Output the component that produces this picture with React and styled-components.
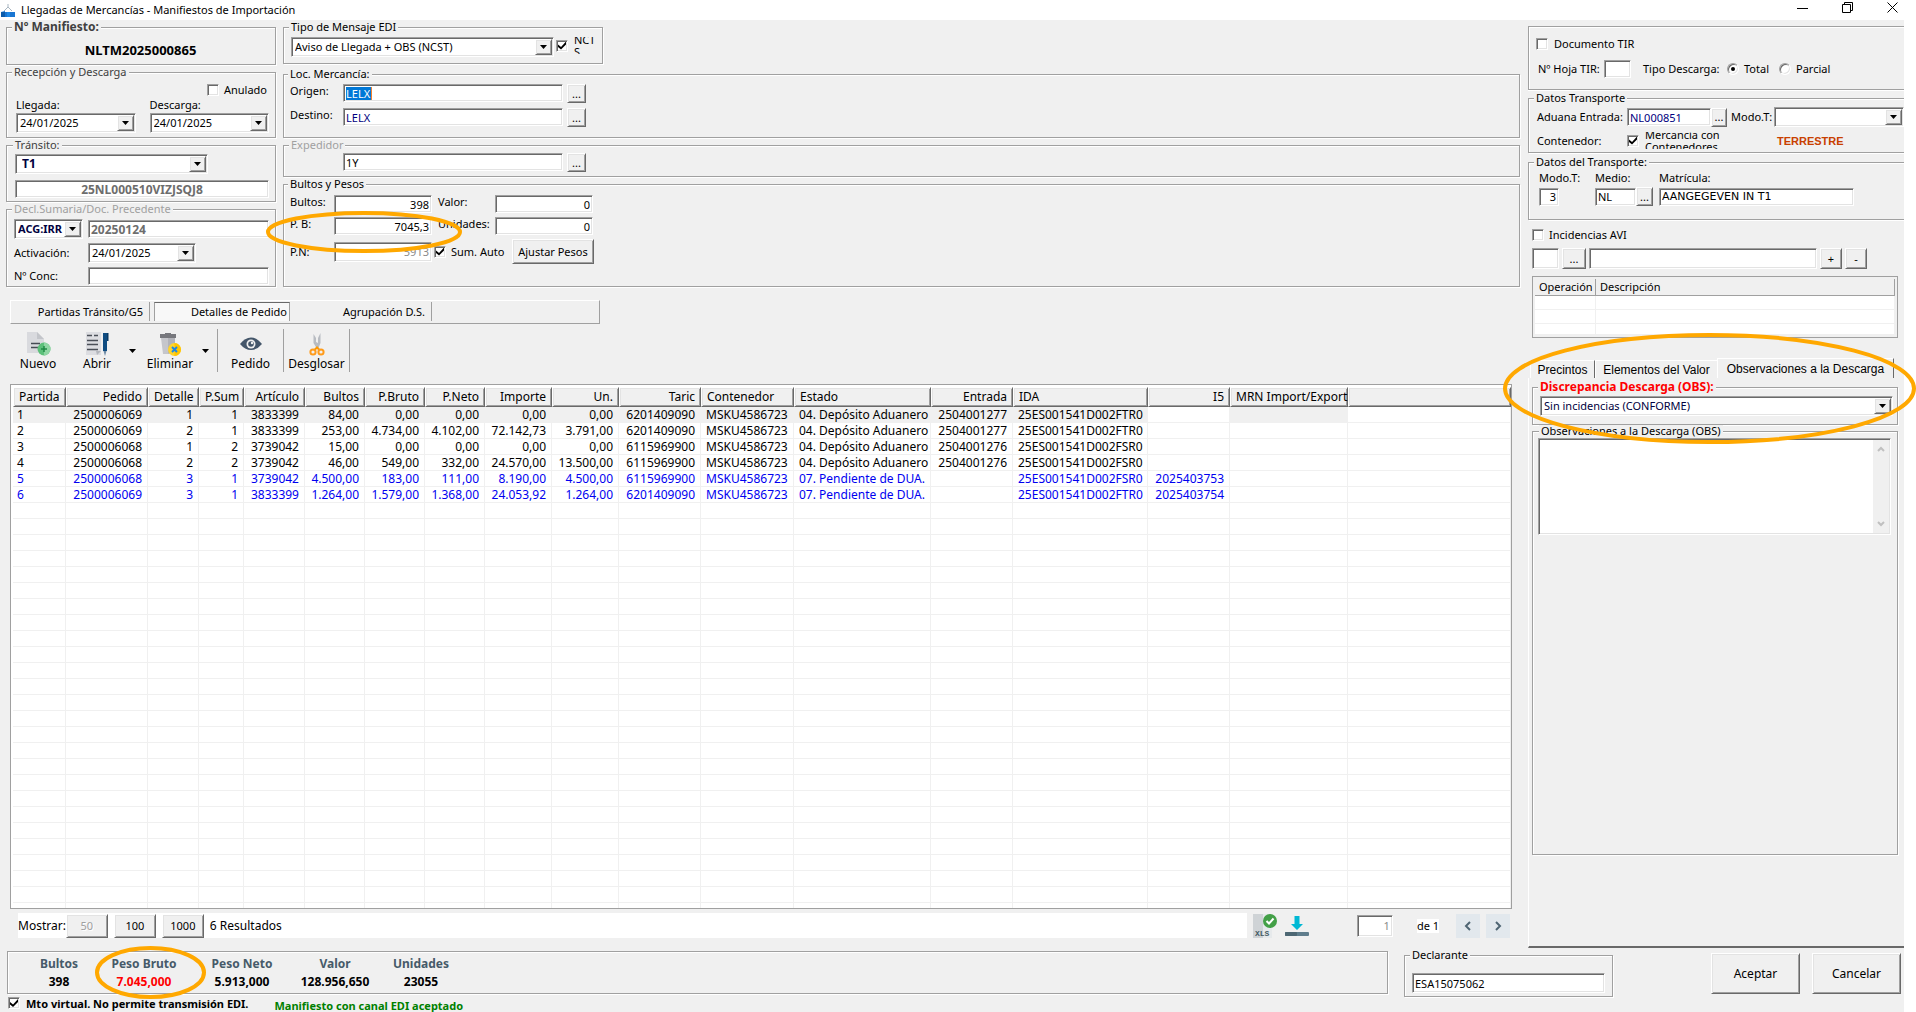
import React, { useState } from "react";
import styled, { createGlobalStyle, css } from "styled-components";

const GlobalStyle = createGlobalStyle`
  * {
    box-sizing: border-box;
  }

  body {
    margin: 0;
    background: #fff;
    color: #000;
    font-family: "Noto Sans", "Open Sans", sans-serif;
    font-size: 11px;
    line-height: 14px;
  }

  button, input, select, textarea {
    font: inherit;
    color: inherit;
    margin: 0;
  }
`;

const sunken = css`
  border: 1px solid;
  border-color: #a0a0a0 #fff #fff #a0a0a0;
  box-shadow: inset 1px 1px 0 #696969, inset -1px -1px 0 #e3e3e3;
`;

const raised = css`
  border: 1px solid;
  border-color: #fff #696969 #696969 #fff;
  box-shadow: inset 1px 1px 0 #e3e3e3, inset -1px -1px 0 #a0a0a0;
`;

const Screen = styled.div`
  display: flex;
  flex-direction: column;
  min-height: 100vh;
  overflow: hidden;
`;

/* ---------- title bar ---------- */

const TitleBar = styled.header`
  display: flex;
  align-items: center;
  gap: 6px;
  height: 20px;
  padding-right: 18px;
`;

const Title = styled.h1`
  flex: 1;
  margin: 0;
  font-size: 11px;
  font-weight: 400;
  line-height: 18px;
`;

const WindowButtons = styled.div`
  display: flex;
  gap: 34px;
  padding-bottom: 6px;
`;

const WindowButton = styled.button`
  display: flex;
  padding: 0;
  border: 0;
  background: none;
`;

/* ---------- page areas ---------- */

const Window = styled.div`
  flex: 1;
  display: flex;
  flex-direction: column;
  margin-right: 12px;
  background: #f0f0f0;
`;

const Body = styled.div`
  flex: 1;
  display: flex;
  gap: 8px;
`;

const Main = styled.main`
  flex: 1;
  min-width: 0;
  display: flex;
  flex-direction: column;
  padding: 1px 0 10px 6px;
`;

const Side = styled.aside`
  width: 376px;
  display: flex;
  flex-direction: column;
  padding-top: 6px;
`;

const HeaderForms = styled.div`
  display: flex;
  gap: 7px;
`;

const FormColumn = styled.div`
  display: flex;
  flex-direction: column;
  gap: 1px;
  width: ${(p) => p.$width || "auto"};
  flex: ${(p) => (p.$width ? "none" : 1)};
`;

/* ---------- group box ---------- */

const Group = styled.fieldset`
  position: relative;
  min-width: 0;
  min-height: ${(p) => p.$height}px;
  width: ${(p) => p.$width || "auto"};
  flex: ${(p) => (p.$grow ? 1 : "none")};
  margin: ${(p) => p.$margin || 0};
  padding: ${(p) => p.$pad || 0};
  border: 1px solid #a0a0a0;
  border-right-width: ${(p) => (p.$open ? 0 : 1)}px;
  box-shadow: inset 1px 1px 0 #fff, 1px 1px 0 #fff;
`;

const Legend = styled.legend`
  margin-left: ${(p) => p.$left || -2}px;
  padding: 0 2px;
  background: #f0f0f0;
  line-height: 12px;
  color: ${(p) => p.$color || "#000"};
  font-weight: ${(p) => (p.$bold ? 700 : 400)};
  font-size: ${(p) => p.$size || 11}px;
`;

const Row = styled.div`
  display: flex;
  align-items: ${(p) => p.$align || "center"};
  justify-content: ${(p) => p.$justify || "flex-start"};
  gap: ${(p) => p.$gap || 0}px;
  padding: ${(p) => p.$pad || 0};
`;

const Stack = styled.div`
  display: flex;
  flex-direction: column;
  gap: ${(p) => p.$gap || 0}px;
`;

const FormGrid = styled.div`
  display: grid;
  grid-template-columns: ${(p) => p.$cols};
  column-gap: ${(p) => p.$colGap || 0}px;
  row-gap: ${(p) => p.$gap || 0}px;
  align-items: ${(p) => p.$align || "center"};
`;

const Label = styled.label`
  width: ${(p) => (p.$width ? p.$width + "px" : "auto")};
  padding-left: ${(p) => p.$indent || 0}px;
  flex: none;
  white-space: nowrap;
`;

/* ---------- controls ---------- */

const Field = styled.input`
  ${sunken}
  width: ${(p) => (p.$width ? p.$width + "px" : "100%")};
  height: ${(p) => p.$height || 18}px;
  padding: 0 2px;
  background: #fff;
  border-radius: 0;
  outline: 0;
  color: ${(p) => p.$color || "#000"};
  text-align: ${(p) => p.$align || "left"};
  font-weight: ${(p) => (p.$bold ? 700 : 400)};
  font-size: ${(p) => p.$size || 11}px;
  font-family: ${(p) => p.$font || "inherit"};
`;

const SelectedField = styled.div`
  ${sunken}
  display: flex;
  align-items: center;
  height: 18px;
  padding: 0 2px;
  background: #fff;

  span {
    padding: 0 1px 0 0;
    border-right: 1px solid #f08030;
    background: #0078d7;
    color: #fff;
    line-height: 13px;
    outline: 0;
  }
`;

const ComboBox = styled.div`
  ${sunken}
  display: flex;
  width: ${(p) => (p.$width ? p.$width + "px" : "100%")};
  flex: ${(p) => (p.$grow ? 1 : "none")};
  min-width: 0;
  height: ${(p) => p.$height || 20}px;
  padding: 2px;
  background: #fff;
  position: relative;
`;

const ComboSelect = styled.select`
  appearance: none;
  width: 100%;
  padding: 0 15px 0 ${(p) => p.$indent || 1}px;
  border: 0;
  outline: 0;
  background: transparent;
  color: ${(p) => p.$color || "#000"};
  font-weight: ${(p) => (p.$bold ? 700 : 400)};
  font-size: ${(p) => p.$size || 11}px;
  line-height: 14px;
`;

const ComboArrow = styled.span`
  ${raised}
  position: absolute;
  top: 1px;
  right: 1px;
  bottom: 1px;
  width: 17px;
  display: flex;
  align-items: center;
  justify-content: center;
  background: #f0f0f0;
  pointer-events: none;
`;

const Button = styled.button`
  ${raised}
  flex: none;
  width: ${(p) => p.$width}px;
  height: ${(p) => p.$height || 19}px;
  padding: 0;
  background: #f0f0f0;
  font-size: ${(p) => p.$size || 11}px;
  white-space: nowrap;

  &:disabled {
    color: #a0a0a0;
    text-shadow: 1px 1px 0 #fff;
  }
`;

const Check = styled.input.attrs({ type: "checkbox" })`
  ${sunken}
  appearance: none;
  flex: none;
  width: 12px;
  height: 12px;
  background: #fff;
  display: grid;
  place-items: center;

  &:checked::before {
    content: "";
    width: 8px;
    height: 8px;
    background: #000;
    clip-path: polygon(0 38%, 38% 68%, 100% 0, 100% 38%, 38% 100%, 0 70%);
  }
`;

const Radio = styled.input.attrs({ type: "radio" })`
  ${sunken}
  appearance: none;
  flex: none;
  width: 12px;
  height: 12px;
  border-radius: 50%;
  background: #fff;
  display: grid;
  place-items: center;

  &:checked::before {
    content: "";
    width: 4px;
    height: 4px;
    border-radius: 50%;
    background: #000;
  }
`;

const ClippedLabel = styled.label`
  display: flex;
  align-items: center;
  width: ${(p) => p.$width}px;
  height: 17px;
  overflow: hidden;
  line-height: 12px;
  word-break: ${(p) => (p.$break ? "break-all" : "normal")};
`;

const ManifestNumber = styled.p`
  margin: 0;
  padding-right: 8px;
  text-align: center;
  font-size: 13px;
  font-weight: 700;
  line-height: 18px;
`;

const Mode = styled.strong`
  padding-left: 46px;
  color: #c84000;
  font-family: "Liberation Sans", Arial, sans-serif;
  font-size: 11px;
`;

/* ---------- tabs and toolbar ---------- */

const TabStrip = styled.div`
  display: flex;
  width: 590px;
  height: 24px;
  margin: 13px 0 0 4px;
  padding: 1px 0 0 2px;
  border: 1px solid;
  border-color: #fff #a0a0a0 #a0a0a0 #fff;
`;

const Tab = styled.button`
  width: ${(p) => p.$width}px;
  margin: 0 4px 2px 0;
  padding: 0 6px 0 0;
  border: 0;
  border-right: 1px solid #a0a0a0;
  background: none;
  text-align: right;

  ${(p) =>
    p.$active &&
    css`
      padding-right: 2px;
      border-top: 1px solid #696969;
      border-left: 1px solid #a0a0a0;
      background: #f8f8f8;
    `}
`;

const Toolbar = styled.div`
  display: flex;
  align-items: stretch;
  height: 43px;
  margin: 5px 0 12px;
`;

const Tool = styled.button`
  display: flex;
  flex-direction: column;
  align-items: center;
  justify-content: flex-end;
  width: ${(p) => p.$width}px;
  padding: 0;
  border: 0;
  border-right: ${(p) => (p.$sep ? "1px solid #a0a0a0" : 0)};
  background: none;
  font-size: 12px;
  line-height: 16px;
`;

const ToolMenu = styled.button`
  display: flex;
  align-items: center;
  justify-content: center;
  width: ${(p) => p.$width}px;
  padding: 0 ${(p) => (p.$sep ? 6 : 0)}px 0 0;
  border: 0;
  border-right: ${(p) => (p.$sep ? "1px solid #a0a0a0" : 0)};
  background: none;
`;

/* ---------- data grid ---------- */

const GridFrame = styled.div`
  flex: 1 1 0;
  min-height: 0;
  margin: 0 8px 0 4px;
  padding: 2px 0 0 2px;
  border: 1px solid #a0a0a0;
  background: #fff;
  overflow: hidden;
`;

const Table = styled.table`
  width: 100%;
  table-layout: fixed;
  border-collapse: separate;
  border-spacing: 0;
  font-size: 12px;
`;

const Th = styled.th`
  ${raised}
  height: 20px;
  padding: 0 5px;
  border-bottom-color: #696969;
  background: #f0f0f0;
  font-weight: 400;
  line-height: 16px;
  text-align: ${(p) => p.$align || "right"};
  white-space: nowrap;
`;

const Td = styled.td`
  height: 16px;
  padding: 0 5px 0 4px;
  border-right: 1px solid #f0f0f0;
  border-bottom: 1px solid #f0f0f0;
  background: ${(p) => (p.$shade ? "#f0f0f0" : "#fff")};
  color: ${(p) => (p.$pending ? "#0000f0" : "#000")};
  line-height: 15px;
  text-align: ${(p) => p.$align || "right"};
  white-space: nowrap;

  ${(p) => p.$align === "left" && !p.$first && "padding-left: 5px;"}
`;

const Pager = styled.div`
  display: flex;
  align-items: center;
  margin: 4px 10px 0 12px;
`;

const PagerBar = styled.div`
  flex: 1;
  display: flex;
  align-items: center;
  gap: 6px;
  height: 25px;
  background: #fff;
  font-size: 12px;
`;

const PageSizes = styled.div`
  display: flex;
  gap: 6px;
  margin-left: -6px;
`;

const IconButton = styled.button`
  display: flex;
  margin-left: ${(p) => p.$left || 0}px;
  padding: 0;
  border: 0;
  background: none;
`;

const PageOf = styled.span`
  margin: 0 17px 0 24px;
  background: #fff;
`;

const PageStep = styled.button`
  display: flex;
  align-items: center;
  justify-content: center;
  width: 24px;
  height: 24px;
  margin-left: ${(p) => p.$left || 0}px;
  padding: 0;
  border: 0;
  background: #e2e8ed;
`;

/* ---------- side panel ---------- */

const PlainBox = styled.div`
  min-height: 64px;
  padding: 10px 0 0 7px;
  border: 1px solid #a0a0a0;
  border-right: 0;
  box-shadow: inset 1px 1px 0 #fff, 0 1px 0 #fff;
`;

const Incidents = styled.div`
  padding: 8px 6px 0 4px;
`;

const IncidentTable = styled.table`
  width: 100%;
  margin-top: 7px;
  padding: 2px;
  border: 1px solid #a0a0a0;
  border-spacing: 0;
  table-layout: fixed;

  th {
    height: 17px;
    padding: 0 4px;
    border-right: 1px solid #a0a0a0;
    border-bottom: 1px solid #a0a0a0;
    font-weight: 400;
    text-align: left;
  }

  td {
    height: 14px;
    padding: 0;
    border-right: 1px solid #f0f0f0;
    border-bottom: 1px solid #f0f0f0;
    background: #fff;
  }

  tr:last-child td {
    height: 11px;
  }
`;

const SideTabs = styled.div`
  display: flex;
  align-items: flex-end;
  margin: 20px 9px 0 2px;
  font-family: "Liberation Sans", Arial, sans-serif;
`;

const SideTab = styled.button`
  height: ${(p) => (p.$active ? 20 : 18)}px;
  width: ${(p) => p.$width}px;
  padding: 0;
  border: 0;
  border-top: 1px solid #fff;
  border-left: 1px solid #fff;
  border-right: ${(p) => (p.$edge ? "1px solid #696969" : 0)};
  background: none;
  font-size: 12px;
  white-space: nowrap;
`;

const SidePanel = styled.div`
  flex: 1;
  display: flex;
  flex-direction: column;
  padding: 3px 6px 91px 3px;
  border-left: 1px solid #fff;
  border-bottom: 2px solid #696969;
`;

const Notes = styled.textarea`
  ${sunken}
  display: block;
  width: 353px;
  max-width: 100%;
  height: 97px;
  padding: 3px 20px 3px 3px;
  background: #fff;
  resize: none;
  outline: 0;
  overflow: hidden;
`;

const NotesBox = styled.div`
  position: relative;
`;

const NotesScroll = styled.div`
  position: absolute;
  top: 2px;
  right: 4px;
  bottom: 2px;
  width: 16px;
  display: flex;
  flex-direction: column;
  align-items: center;
  justify-content: space-between;
  padding: 6px 0;
  background: #f0f0f0;
`;

/* ---------- footer ---------- */

const Footer = styled.footer`
  padding: 3px 3px 0 7px;
`;

const Totals = styled.dl`
  position: relative;
  flex: 1;
  display: grid;
  grid-template-columns: 72px 98px 98px 88px 84px;
  padding: 0 0 0 15px;
  align-content: center;
  height: 43px;
  margin: 0 16px 0 0;
  border: 1px solid #a0a0a0;
  box-shadow: inset 1px 1px 0 #fff, 1px 1px 0 #fff;
  font-size: 12px;
  font-weight: 700;
  line-height: 18px;
  text-align: center;

  dt {
    color: #465a69;
  }

  dd {
    margin: 0;
    color: #000;
  }

  dd.alert {
    color: #f00;
  }
`;

const Actions = styled.div`
  display: flex;
  gap: 12px;
  margin-left: 98px;
  padding-top: 2px;
`;

const Status = styled.div`
  display: flex;
  align-items: flex-start;
  gap: 6px;
  padding-left: 1px;
  font-weight: 700;
  line-height: 13px;
`;

const Accepted = styled.span`
  padding: 2px 0 0 20px;
  color: #008000;
  line-height: 13px;
`;

/* hand-drawn style marker that sits over the form */
const Marker = styled.svg`
  position: absolute;
  z-index: 5;
  left: ${(p) => p.$left}px;
  top: ${(p) => p.$top}px;
  width: ${(p) => p.$w}px;
  height: ${(p) => p.$h}px;
  overflow: visible;
  pointer-events: none;
`;

const MarkerHost = styled.div`
  position: relative;
`;

const Highlight = ({ left, top, w, h }) => (
  <Marker $left={left} $top={top} $w={w} $h={h} aria-hidden="true">
    <ellipse
      cx={w / 2}
      cy={h / 2}
      rx={w / 2 - 2}
      ry={h / 2 - 2}
      fill="none"
      stroke="#ffa800"
      strokeWidth="4"
    />
  </Marker>
);

const Triangle = () => (
  <svg width="7" height="4" viewBox="0 0 7 4">
    <path d="M0 0h7L3.5 4z" fill="#000" />
  </svg>
);

const Combo = ({ id, label, value, width, height, grow, ...rest }) => (
  <ComboBox $width={width} $height={height} $grow={grow}>
    <ComboSelect id={id} aria-label={label} defaultValue={value} {...rest}>
      <option value={value}>{value}</option>
    </ComboSelect>
    <ComboArrow>
      <Triangle />
    </ComboArrow>
  </ComboBox>
);

/* ---------- icons ---------- */

const AppIcon = () => (
  <svg width="15" height="16" viewBox="0 0 15 16">
    <path d="M8 2v3M8 5l-4 4M8 5l4 4" stroke="#a9b6c1" fill="none" />
    <path d="M1 10l4-1v1h10v5H1z" fill="#1976d2" />
    <path d="M1 10h4v5H1z" fill="#0d5cab" />
    <path d="M7 10h3v5H7z" fill="#1e88e5" />
  </svg>
);

const NewIcon = () => (
  <svg width="25" height="24" viewBox="0 0 25 24">
    <path d="M1 0h10l7 7v14H1z" fill="#d9dade" />
    <path d="M11 0l7 7h-7z" fill="#c3c5ca" />
    <path d="M5 11.5h9M5 15.500h7" stroke="#454b54" strokeWidth="1.500" />
    <circle cx="18" cy="17" r="6.500" fill="#5cc07a" />
    <path d="M18 10.500a6.500 6.500 0 0 1 0 13z" fill="#8fd6a3" />
    <path d="M18 14v6M15 17h6" stroke="#1f8a45" strokeWidth="1.500" />
  </svg>
);

const OpenIcon = () => (
  <svg width="24" height="24" viewBox="0 0 24 24">
    <path d="M1 0h15v23H1z" fill="#dcdde1" />
    <path d="M11 19h5l-4 4z" fill="#b4b7bd" />
    <path
      d="M2 3.500h5M2 8.500h11M2 12.500h11M2 17.500h11M9 3.500h4"
      stroke="#4a4f57"
      strokeWidth="1.500"
    />
    <path d="M18 1h4v18h-4z" fill="#0f4c81" />
    <path d="M22 1h1.500v8H22z" fill="#0b3a63" />
    <path d="M18.500 19h3L20 24z" fill="#6f8ba5" />
  </svg>
);

const DeleteIcon = () => (
  <svg width="22" height="24" viewBox="0 0 22 24">
    <path d="M1 2h5V1h6v1h5v4H1z" fill="#77787d" />
    <path d="M2 6h14v16H4z" fill="#c5c6cb" />
    <path d="M9 6h7v9l-7 7z" fill="#b2b3b9" />
    <circle cx="15.500" cy="17.500" r="6.500" fill="#ffd42a" />
    <path d="M15.500 11a6.500 6.500 0 0 1 0 13z" fill="#ffc400" />
    <path d="M13 15l5 5M18 15l-5 5" stroke="#1e88e5" strokeWidth="2" />
  </svg>
);

const EyeIcon = () => (
  <svg width="22" height="24" viewBox="0 0 22 24">
    <path d="M0 12Q5 5.500 11 5.500T22 12Q17 18 11 18T0 12z" fill="#44566a" />
    <circle cx="11" cy="12" r="4.500" fill="#f0f0f0" />
    <circle cx="11" cy="12" r="2.800" fill="#44566a" />
    <circle cx="12" cy="11" r="1.200" fill="#f0f0f0" />
  </svg>
);

const ScissorsIcon = () => (
  <svg width="16" height="24" viewBox="0 0 16 24">
    <path d="M4.500 2v9l3 5h2l2-5V1l-2.500 5v5l-2-1V6z" fill="#b8bcc2" />
    <path d="M5 18.500l3-3 3 3" stroke="#ff9800" strokeWidth="2" fill="none" />
    <circle cx="4" cy="20" r="2.600" fill="none" stroke="#ff9b1a" strokeWidth="2" />
    <circle cx="12" cy="20" r="2.600" fill="none" stroke="#ff9b1a" strokeWidth="2" />
  </svg>
);

const SheetIcon = () => (
  <svg width="24" height="24" viewBox="0 0 24 24">
    <path d="M0 0h10v24H0z" fill="#cfd3d6" />
    <path d="M10 0h9v24h-9z" fill="#e6e9eb" />
    <circle cx="17" cy="7" r="7" fill="#43a047" />
    <path d="M13.500 7l2.500 2.500 4.500-5" stroke="#fff" strokeWidth="2" fill="none" />
    <text
      x="2"
      y="22"
      fontSize="8"
      fontWeight="700"
      fontFamily="Liberation Mono, monospace"
      fill="#455a64"
    >
      XLS
    </text>
  </svg>
);

const DownloadIcon = () => (
  <svg width="24" height="22" viewBox="0 0 24 22">
    <path d="M9.500 1h5v8H18l-6 6-6-6h3.500z" fill="#00b8d4" />
    <rect y="17" width="24" height="4" rx="1" fill="#5f7d8c" />
    <rect y="17" width="12" height="4" rx="1" fill="#4d6773" />
  </svg>
);

const Chevron = ({ d, w = 8, h = 10, color = "#4f6573" }) => (
  <svg width={w} height={h} viewBox={`0 0 ${w} ${h}`}>
    <path d={d} fill="none" stroke={color} strokeWidth="2" />
  </svg>
);

/* ---------- data ---------- */

const columns = [
  { title: "Partida", width: 53, align: "left" },
  { title: "Pedido", width: 82 },
  { title: "Detalle", width: 51 },
  { title: "P.Sum", width: 45 },
  { title: "Artículo", width: 61 },
  { title: "Bultos", width: 60 },
  { title: "P.Bruto", width: 60 },
  { title: "P.Neto", width: 60 },
  { title: "Importe", width: 67 },
  { title: "Un.", width: 67 },
  { title: "Taric", width: 82 },
  { title: "Contenedor", width: 93, align: "left" },
  { title: "Estado", width: 137, align: "left" },
  { title: "Entrada", width: 82 },
  { title: "IDA", width: 135, align: "left" },
  { title: "I5", width: 82 },
  { title: "MRN Import/Export", width: 118, align: "left" },
  { title: "" },
];

const rows = [
  ["1", "2500006069", "1", "1", "3833399", "84,00", "0,00", "0,00", "0,00", "0,00", "6201409090", "MSKU4586723", "04. Depósito Aduanero", "2504001277", "25ES001541D002FTR0", ""],
  ["2", "2500006069", "2", "1", "3833399", "253,00", "4.734,00", "4.102,00", "72.142,73", "3.791,00", "6201409090", "MSKU4586723", "04. Depósito Aduanero", "2504001277", "25ES001541D002FTR0", ""],
  ["3", "2500006068", "1", "2", "3739042", "15,00", "0,00", "0,00", "0,00", "0,00", "6115969900", "MSKU4586723", "04. Depósito Aduanero", "2504001276", "25ES001541D002FSR0", ""],
  ["4", "2500006068", "2", "2", "3739042", "46,00", "549,00", "332,00", "24.570,00", "13.500,00", "6115969900", "MSKU4586723", "04. Depósito Aduanero", "2504001276", "25ES001541D002FSR0", ""],
  ["5", "2500006068", "3", "1", "3739042", "4.500,00", "183,00", "111,00", "8.190,00", "4.500,00", "6115969900", "MSKU4586723", "07. Pendiente de DUA.", "", "25ES001541D002FSR0", "2025403753"],
  ["6", "2500006069", "3", "1", "3833399", "1.264,00", "1.579,00", "1.368,00", "24.053,92", "1.264,00", "6201409090", "MSKU4586723", "07. Pendiente de DUA.", "", "25ES001541D002FTR0", "2025403754"],
];

const emptyRows = Array.from({ length: 26 }, () => []);

const totals = [
  ["Bultos", "398"],
  ["Peso Bruto", "7.045,000", true],
  ["Peso Neto", "5.913,000"],
  ["Valor", "128.956,650"],
  ["Unidades", "23055"],
];

const VERDANA = '"DejaVu Sans", Verdana, sans-serif';
const NAVY = "#000080";

const App = () => {
  const [tab, setTab] = useState(1);
  const [discharge, setDischarge] = useState("total");

  return (
    <Screen>
      <GlobalStyle />
      <TitleBar>
        <AppIcon />
        <Title>Llegadas de Mercancías - Manifiestos de Importación</Title>
        <WindowButtons>
          <WindowButton aria-label="Minimizar">
            <svg width="11" height="11"><path d="M0 6.500h11" stroke="#000" /></svg>
          </WindowButton>
          <WindowButton aria-label="Restaurar">
            <svg width="11" height="11">
              <path d="M.5 2.500h8v8h-8zM2.500 2.500v-2h8v8h-2" stroke="#000" fill="none" />
            </svg>
          </WindowButton>
          <WindowButton aria-label="Cerrar">
            <svg width="11" height="11"><path d="M.5.5l10 10M10.500.5l-10 10" stroke="#000" /></svg>
          </WindowButton>
        </WindowButtons>
      </TitleBar>

      <Window>
        <Body>
          <Main>
            <HeaderForms>
              <FormColumn $width="270px">
                <Group $height={44} $pad="8px 0 0 7px">
                  <Legend $bold $size={12} $color="#404040">Nº Manifiesto:</Legend>
                  <ManifestNumber>NLTM2025000865</ManifestNumber>
                </Group>

                <Group $height={72} $pad="5px 6px 0 9px">
                  <Legend $left={-4} $color="#404040">Recepción y Descarga</Legend>
                  <Row $justify="flex-end" $gap={5} $pad="0 2px 1px 0">
                    <Check id="anulado" />
                    <Label htmlFor="anulado">Anulado</Label>
                  </Row>
                  <FormGrid $cols="1fr 1fr" $colGap={14} $gap={1}>
                    <Label htmlFor="llegada">Llegada:</Label>
                    <Label htmlFor="descarga">Descarga:</Label>
                    <Combo id="llegada" value="24/01/2025" />
                    <Combo id="descarga" value="24/01/2025" />
                  </FormGrid>
                </Group>

                <Group $height={63} $pad="3px 6px 0 8px">
                  <Legend $color="#404040">Tránsito:</Legend>
                  <Stack $gap={6}>
                    <Combo label="Tránsito" value="T1" width={193} $indent={4} $bold $size={12} $color="#000040" />
                    <Field aria-label="Documento de tránsito" defaultValue="25NL000510VIZJSQJ8" $align="center" $bold $size={12} $color="#6d6d6d" />
                  </Stack>
                </Group>

                <Group $height={84} $pad="4px 6px 0 7px">
                  <Legend $color="#a0a0a0">Decl.Sumaria/Doc. Precedente</Legend>
                  <FormGrid $cols="74px 1fr" $gap={4}>
                    <Combo label="Tipo de documento" value="ACG:IRR" width={69} $indent={1} $bold $color="#000040" />
                    <Field aria-label="Documento precedente" defaultValue="20250124" $bold $size={12} $color="#6d6d6d" />
                    <Label htmlFor="activacion">Activación:</Label>
                    <Combo id="activacion" value="24/01/2025" width={108} />
                    <Label htmlFor="conc">Nº Conc:</Label>
                    <Field id="conc" />
                  </FormGrid>
                </Group>
              </FormColumn>

              <FormColumn>
                <Group $height={43} $width="320px" $margin="0 0 3px" $pad="4px 7px 0">
                  <Legend>Tipo de Mensaje EDI</Legend>
                  <Row $gap={2} $align="flex-start">
                    <Combo label="Tipo de Mensaje EDI" value="Aviso de Llegada + OBS (NCST)" width={263} />
                    <Row $gap={6}>
                      <Check id="ncts" defaultChecked />
                      <ClippedLabel htmlFor="ncts" $width={22} $break>NCTS</ClippedLabel>
                    </Row>
                  </Row>
                </Group>

                <Group $height={70} $pad="4px 6px 0">
                  <Legend>Loc. Mercancía:</Legend>
                  <FormGrid $cols="53px 220px auto" $gap={5} $align="start">
                    <Label id="origen">Origen:</Label>
                    <SelectedField>
                      <span role="textbox" aria-labelledby="origen" tabIndex={0}>LELX</span>
                    </SelectedField>
                    <Row $pad="0 0 0 4px"><Button $width={19}>...</Button></Row>
                    <Label htmlFor="destino">Destino:</Label>
                    <Field id="destino" defaultValue="LELX" $color={NAVY} />
                    <Row $pad="0 0 0 4px"><Button $width={19}>...</Button></Row>
                  </FormGrid>
                </Group>

                <Group $height={38} $pad="2px 6px 0 59px">
                  <Legend $left={-54} $color="#a0a0a0">Expedidor</Legend>
                  <Row $gap={4} $align="flex-start">
                    <Field aria-label="Expedidor" defaultValue="1Y" $width={220} />
                    <Button $width={19}>...</Button>
                  </Row>
                </Group>

                <Group $height={109} $pad="5px 6px 0">
                  <Legend>Bultos y Pesos</Legend>
                  <Stack $gap={4}>
                    <Row $align="flex-start">
                      <Label htmlFor="bultos" $width={44}>Bultos:</Label>
                      <Field id="bultos" defaultValue="398" $width={98} $align="right" />
                      <Label htmlFor="valor" $width={63} $indent={6}>Valor:</Label>
                      <Field id="valor" defaultValue="0" $width={98} $align="right" />
                    </Row>
                    <Row $align="flex-start">
                      <Label htmlFor="pb" $width={44}>P. B:</Label>
                      <Field id="pb" defaultValue="7045,3" $width={98} $align="right" />
                      <Label htmlFor="unidades" $width={63} $indent={6}>Unidades:</Label>
                      <Field id="unidades" defaultValue="0" $width={98} $align="right" />
                    </Row>
                    <Row>
                      <Label htmlFor="pn" $width={44}>P.N:</Label>
                      <Field id="pn" defaultValue="5913" $width={98} $height={20} $align="right" $color="#8a8a8a" />
                      <Row $gap={5} $pad="0 0 0 2px">
                        <Check id="sumauto" defaultChecked />
                        <Label htmlFor="sumauto" $width={61}>Sum. Auto</Label>
                      </Row>
                      <Button $width={82} $height={25}>Ajustar Pesos</Button>
                    </Row>
                  </Stack>
                  <Highlight left={-18} top={21} w={196} h={42} />
                </Group>
              </FormColumn>
            </HeaderForms>

            <TabStrip role="tablist">
              {["Partidas Tránsito/G5", "Detalles de Pedido", "Agrupación D.S."].map((t, i) => (
                <Tab
                  key={t}
                  role="tab"
                  aria-selected={tab === i}
                  $active={tab === i}
                  $width={[137, 136, 138][i]}
                  onClick={() => setTab(i)}
                >
                  {t}
                </Tab>
              ))}
            </TabStrip>

            <Toolbar>
              <Tool $width={64}><NewIcon />Nuevo</Tool>
              <Tool $width={54}><OpenIcon />Abrir</Tool>
              <ToolMenu $width={16} aria-label="Opciones de abrir"><Triangle /></ToolMenu>
              <Tool $width={60}><DeleteIcon />Eliminar</Tool>
              <ToolMenu $width={18} $sep aria-label="Opciones de eliminar"><Triangle /></ToolMenu>
              <Tool $width={66} $sep><EyeIcon />Pedido</Tool>
              <Tool $width={66} $sep><ScissorsIcon />Desglosar</Tool>
            </Toolbar>

            <GridFrame>
              <Table>
                <colgroup>
                  {columns.map((c, i) => (
                    <col key={i} width={c.width} />
                  ))}
                </colgroup>
                <thead>
                  <tr>
                    {columns.map((c, i) => (
                      <Th key={i} $align={c.align}>{c.title}</Th>
                    ))}
                  </tr>
                </thead>
                <tbody>
                  {[...rows, ...emptyRows].map((row, r) => (
                    <tr key={r}>
                      {columns.map((c, i) => (
                        <Td
                          key={i}
                          $first={i === 0}
                          $align={c.align}
                          $pending={r > 3}
                          $shade={r === 0 && i !== 15 && i !== 17}
                        >
                          {row[i]}
                        </Td>
                      ))}
                    </tr>
                  ))}
                </tbody>
              </Table>
            </GridFrame>

            <Pager>
              <PagerBar>
                <span>Mostrar:</span>
                <PageSizes>
                  <Button $width={42} $height={24} disabled>50</Button>
                  <Button $width={42} $height={24}>100</Button>
                  <Button $width={42} $height={24}>1000</Button>
                </PageSizes>
                <span>6 Resultados</span>
              </PagerBar>
              <IconButton $left={6} aria-label="Exportar a XLS"><SheetIcon /></IconButton>
              <IconButton $left={8} aria-label="Descargar"><DownloadIcon /></IconButton>
              <Row $pad="0 0 0 48px">
                <Field aria-label="Página" defaultValue="1" $width={36} $height={22} $align="right" $color="#8a8a8a" />
              </Row>
              <PageOf>de 1</PageOf>
              <PageStep aria-label="Anterior"><Chevron d="M6 1L2 5l4 4" /></PageStep>
              <PageStep $left={6} aria-label="Siguiente"><Chevron d="M2 1l4 4-4 4" /></PageStep>
            </Pager>
          </Main>

          <Side>
            <PlainBox>
              <Row $gap={6}>
                <Check id="tir" />
                <Label htmlFor="tir">Documento TIR</Label>
              </Row>
              <Row $pad="9px 0 0 2px">
                <Label htmlFor="hoja" $width={66}>Nº Hoja TIR:</Label>
                <Field id="hoja" $width={27} />
                <Label as="span" $width={96} $indent={12}>Tipo Descarga:</Label>
                <Row $gap={5}>
                  <Radio
                    id="total"
                    name="tipo"
                    checked={discharge === "total"}
                    onChange={() => setDischarge("total")}
                  />
                  <Label htmlFor="total" $width={30}>Total</Label>
                  <Radio
                    id="parcial"
                    name="tipo"
                    checked={discharge === "parcial"}
                    onChange={() => setDischarge("parcial")}
                  />
                  <Label htmlFor="parcial">Parcial</Label>
                </Row>
              </Row>
            </PlainBox>

            <Group $height={61} $margin="2px 0 0" $pad="3px 0 0 8px" $open>
              <Legend $left={-3}>Datos Transporte</Legend>
              <Row>
                <Label htmlFor="aduana" $width={90}>Aduana Entrada:</Label>
                <Field id="aduana" defaultValue="NL000851" $width={84} $color={NAVY} />
                <Button $width={16}>...</Button>
                <Label htmlFor="modot" $width={47} $indent={4}>Modo.T:</Label>
                <Combo id="modot" value="" grow />
              </Row>
              <Row $pad="5px 0 0">
                <Label as="span" $width={90}>Contenedor:</Label>
                <Row $gap={6}>
                  <Check id="contenedores" defaultChecked />
                  <ClippedLabel htmlFor="contenedores" $width={86}>Mercancía con Contenedores</ClippedLabel>
                </Row>
                <Mode>TERRESTRE</Mode>
              </Row>
            </Group>

            <Group $height={64} $margin="3px 0 0" $pad="3px 0 0 10px" $open>
              <Legend $left={-5}>Datos del Transporte:</Legend>
              <FormGrid $cols="56px 64px 195px" $gap={2}>
                <Label htmlFor="modo2">Modo.T:</Label>
                <Label htmlFor="medio">Medio:</Label>
                <Label htmlFor="matricula">
                  Matrícula:
                </Label>
                <Field id="modo2" defaultValue="3" $width={20} $align="right" />
                <Row>
                  <Field id="medio" defaultValue="NL" $width={41} />
                  <Button $width={17}>...</Button>
                </Row>
                <Field id="matricula" defaultValue="AANGEGEVEN IN T1" $font={VERDANA} />
              </FormGrid>
            </Group>

            <Incidents>
              <Row $gap={5}>
                <Check id="avi" />
                <Label htmlFor="avi">Incidencias AVI</Label>
              </Row>
              <Row $gap={3} $pad="6px 0 0">
                <Field aria-label="Código de incidencia" $width={27} $height={21} />
                <Button $width={24} $height={21}>...</Button>
                <Field aria-label="Incidencia" $width={228} $height={21} />
                <Button $width={22} $height={21}>+</Button>
                <Button $width={22} $height={21}>-</Button>
              </Row>
              <IncidentTable>
                <colgroup>
                  <col width="61" />
                  <col />
                </colgroup>
                <thead>
                  <tr><th>Operación</th><th>Descripción</th></tr>
                </thead>
                <tbody>
                  <tr><td /><td /></tr>
                  <tr><td /><td /></tr>
                  <tr><td /><td /></tr>
                </tbody>
              </IncidentTable>
            </Incidents>

            <MarkerHost>
              <SideTabs role="tablist">
                <SideTab role="tab" $width={65} $edge>Precintos</SideTab>
                <SideTab role="tab" $width={122}>Elementos del Valor</SideTab>
                <SideTab role="tab" aria-selected $active $width={177} $edge>
                  Observaciones a la Descarga
                </SideTab>
              </SideTabs>
              <Highlight left={-25} top={-5} w={413} h={111} />
            </MarkerHost>

            <SidePanel>
              <Group $height={44} $pad="3px 4px 0 7px">
                <Legend $bold $color="#f00" $size={12}>Discrepancia Descarga (OBS):</Legend>
                <Combo label="Discrepancia Descarga" value="Sin incidencias (CONFORME)" $color="#000040" />
              </Group>
              <Group $height={120} $pad="1px 4px 0 5px" $grow>
                <Legend $left={1}>Observaciones a la Descarga (OBS)</Legend>
                <NotesBox>
                  <Notes aria-label="Observaciones a la Descarga (OBS)" />
                  <NotesScroll>
                    <Chevron d="M1 5l3-3 3 3" h={6} color="#c0c0c0" />
                    <Chevron d="M1 1l3 3 3-3" h={6} color="#c0c0c0" />
                  </NotesScroll>
                </NotesBox>
              </Group>
            </SidePanel>
          </Side>
        </Body>

        <Footer>
          <Row $align="flex-start">
            <Totals>
              {totals.map(([name]) => (
                <dt key={name}>{name}</dt>
              ))}
              {totals.map(([name, value, alert]) => (
                <dd key={name} className={alert ? "alert" : undefined}>{value}</dd>
              ))}
              <Highlight left={87} top={-6} w={111} h={53} />
            </Totals>
            <Group $height={48} $width="209px" $margin="-2px 0 0" $pad="12px 7px 0">
              <Legend>Declarante</Legend>
              <Field aria-label="Declarante" defaultValue="ESA15075062" $height={20} />
            </Group>
            <Actions>
              <Button $width={89} $height={41} $size={12}>Aceptar</Button>
              <Button $width={89} $height={41} $size={12}>Cancelar</Button>
            </Actions>
          </Row>
          <Status>
            <Check id="virtual" defaultChecked />
            <Label htmlFor="virtual">Mto virtual. No permite transmisión EDI.</Label>
            <Accepted>Manifiesto con canal EDI aceptado</Accepted>
          </Status>
        </Footer>
      </Window>
    </Screen>
  );
};

export default App;
